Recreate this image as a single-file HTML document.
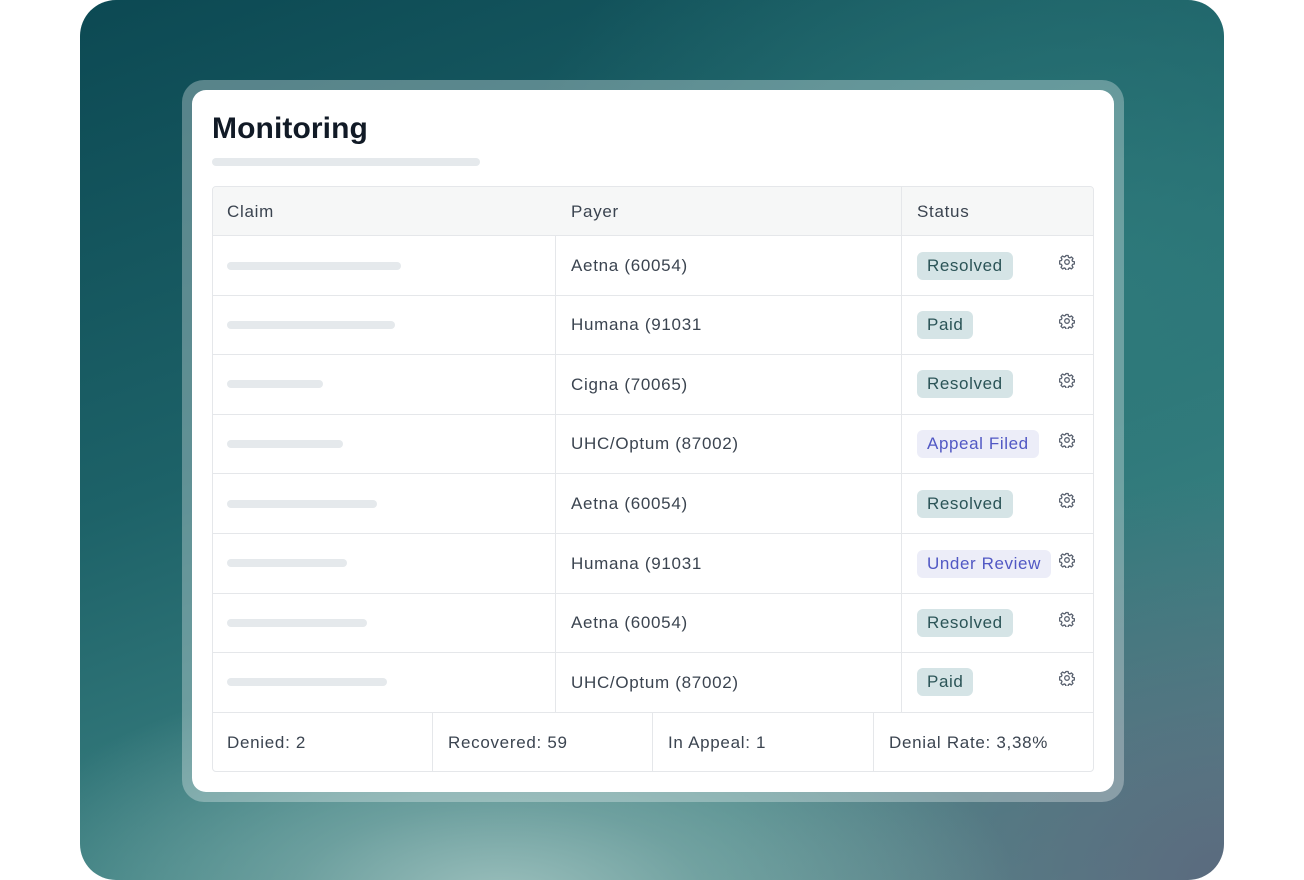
<!DOCTYPE html>
<html><head><style>
*{margin:0;padding:0;box-sizing:border-box}
body{width:1304px;height:880px;background:#fff;position:relative;overflow:hidden;font-family:"Liberation Sans",sans-serif}
.bg{position:absolute;left:80px;top:0;width:1144px;height:880px;border-radius:36px;overflow:hidden;
background:
radial-gradient(ellipse 520px 240px at 420px 900px,#9cc0bd 0%,rgba(140,180,178,0.6) 40%,rgba(100,150,150,0) 100%),
radial-gradient(ellipse 500px 400px at 1144px 880px,#5a6a7e 0%,rgba(90,106,126,0) 100%),
radial-gradient(ellipse 600px 500px at 1000px 300px,#2e7a7b 0%,rgba(46,122,123,0) 100%),
linear-gradient(160deg,#0c4953 0%,#1d6268 40%,#3a7f80 70%,#5b8e8e 100%);}
.frame{position:absolute;left:182px;top:80px;width:942px;height:722px;border-radius:22px;background:rgba(255,255,255,0.3)}
.card{position:absolute;left:192px;top:90px;width:922px;height:702px;border-radius:14px;background:#fff}
h1{position:absolute;left:212px;top:112px;font-size:30px;font-weight:bold;color:#111a26;letter-spacing:0.1px}
.bar{position:absolute;height:8px;border-radius:4px;background:#e5e9ec}
.tbl{position:absolute;left:212px;top:186px;width:882px;height:586px;border:1px solid #e5e7ea;border-radius:4px;overflow:hidden}
.hd{position:absolute;left:0;top:0;width:880px;height:49px;background:#f6f7f7;border-bottom:1px solid #e5e7ea}
.t{position:absolute;font-size:17px;color:#3b4450;letter-spacing:0.7px}
.hl{position:absolute;height:1px;background:#e5e7ea;left:0;width:880px}
.vl{position:absolute;width:1px;background:#e5e7ea}
.pill{position:absolute;height:28px;border-radius:6px;font-size:17px;line-height:28px;padding:0 10px;letter-spacing:0.6px}
.res{background:#d5e4e6;color:#2b5457}
.ap{background:#ecedf8;color:#5158c4}
.g{position:absolute;width:16px;height:16px}
</style></head><body>
<div class="bg"></div>
<div class="frame"></div>
<div class="card"></div>
<h1>Monitoring</h1>
<div class="bar" style="left:212px;top:158px;width:268px"></div>
<div class="tbl">
<div class="hd"></div>
<div class="t" style="left:14px;top:15px">Claim</div>
<div class="t" style="left:358px;top:15px">Payer</div>
<div class="t" style="left:704px;top:15px">Status</div>
<div class="vl" style="left:688px;top:0;height:525px"></div>
<div class="vl" style="left:342px;top:49px;height:476px"></div>
<div class="vl" style="left:219px;top:525px;height:60px"></div>
<div class="vl" style="left:439px;top:525px;height:60px"></div>
<div class="vl" style="left:660px;top:525px;height:60px"></div>
<div class="hl" style="top:108px"></div><div class="hl" style="top:167px"></div><div class="hl" style="top:227px"></div><div class="hl" style="top:286px"></div><div class="hl" style="top:346px"></div><div class="hl" style="top:406px"></div><div class="hl" style="top:465px"></div><div class="hl" style="top:525px"></div>
<div class="t" style="left:14px;top:546px">Denied: 2</div>
<div class="t" style="left:235px;top:546px">Recovered: 59</div>
<div class="t" style="left:455px;top:546px">In Appeal: 1</div>
<div class="t" style="left:676px;top:546px">Denial Rate: 3,38%</div>
</div>
<div class="bar" style="left:227px;top:262px;width:174px"></div>
<div class="bar" style="left:227px;top:321px;width:168px"></div>
<div class="bar" style="left:227px;top:380px;width:96px"></div>
<div class="bar" style="left:227px;top:440px;width:116px"></div>
<div class="bar" style="left:227px;top:500px;width:150px"></div>
<div class="bar" style="left:227px;top:559px;width:120px"></div>
<div class="bar" style="left:227px;top:619px;width:140px"></div>
<div class="bar" style="left:227px;top:678px;width:160px"></div>
<div class="t" style="left:571px;top:256px">Aetna (60054)</div>
<div class="t" style="left:571px;top:315px">Humana (91031</div>
<div class="t" style="left:571px;top:375px">Cigna (70065)</div>
<div class="t" style="left:571px;top:434px">UHC/Optum (87002)</div>
<div class="t" style="left:571px;top:494px">Aetna (60054)</div>
<div class="t" style="left:571px;top:554px">Humana (91031</div>
<div class="t" style="left:571px;top:613px">Aetna (60054)</div>
<div class="t" style="left:571px;top:673px">UHC/Optum (87002)</div>
<div class="pill res" style="left:917px;top:252px">Resolved</div>
<div class="pill res" style="left:917px;top:311px">Paid</div>
<div class="pill res" style="left:917px;top:370px">Resolved</div>
<div class="pill ap" style="left:917px;top:430px">Appeal Filed</div>
<div class="pill res" style="left:917px;top:490px">Resolved</div>
<div class="pill ap" style="left:917px;top:550px">Under Review</div>
<div class="pill res" style="left:917px;top:609px">Resolved</div>
<div class="pill res" style="left:917px;top:668px">Paid</div>
<svg width="0" height="0" style="position:absolute"><defs><g id="gear" fill="none" stroke="#5a6270" stroke-width="1.3" stroke-linejoin="round"><path d="M6.9 1.5h2.2l.4 1.8 1.3.6 1.6-1 1.6 1.6-1 1.6.6 1.3 1.8.4v2.2l-1.8.4-.6 1.3 1 1.6-1.6 1.6-1.6-1-1.3.6-.4 1.8H6.9l-.4-1.8-1.3-.6-1.6 1-1.6-1.6 1-1.6-.6-1.3-1.8-.4V6.9l1.8-.4.6-1.3-1-1.6 1.6-1.6 1.6 1 1.3-.6z"/><circle cx="8" cy="8" r="2.3"/></g></defs></svg>
<svg class="g" style="left:1059px;top:254px" viewBox="0 0 16 16"><use href="#gear"/></svg>
<svg class="g" style="left:1059px;top:313px" viewBox="0 0 16 16"><use href="#gear"/></svg>
<svg class="g" style="left:1059px;top:372px" viewBox="0 0 16 16"><use href="#gear"/></svg>
<svg class="g" style="left:1059px;top:432px" viewBox="0 0 16 16"><use href="#gear"/></svg>
<svg class="g" style="left:1059px;top:492px" viewBox="0 0 16 16"><use href="#gear"/></svg>
<svg class="g" style="left:1059px;top:552px" viewBox="0 0 16 16"><use href="#gear"/></svg>
<svg class="g" style="left:1059px;top:611px" viewBox="0 0 16 16"><use href="#gear"/></svg>
<svg class="g" style="left:1059px;top:670px" viewBox="0 0 16 16"><use href="#gear"/></svg>
</body></html>
